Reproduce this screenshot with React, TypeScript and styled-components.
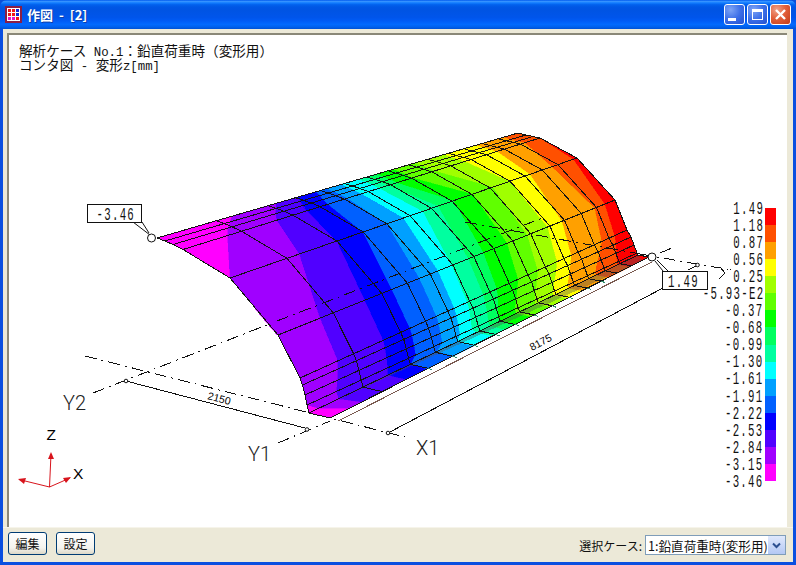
import React from "react";
import styled, { createGlobalStyle } from "styled-components";

// mesh nodes of the shell: near arc and far arc, same index = same longitudinal line
const NEAR: [number, number][] = [
  [157, 238], [165, 241], [173, 244.5], [183, 249.5], [230, 278], [278, 335],
  [300, 378], [302.5, 385], [305, 395], [307, 405], [309, 413], [330, 418],
];
const FAR: [number, number][] = [
  [518, 133], [526, 135], [533, 136.5], [540, 138], [577, 158], [615, 200],
  [627, 230], [631, 237], [634, 245], [637, 253], [638, 255], [649, 257],
];
const ARCS = [0, 0.164, 0.308, 0.384, 0.452, 0.519, 0.581, 0.64, 0.697, 0.75, 0.807, 0.85, 0.9, 0.945, 1];

const BANDS = [
  "#ff00ff", "#a000ff", "#5000ff", "#0000ff", "#0060ff", "#00a0ff", "#00ffff", "#00ffa0",
  "#00ff60", "#00ff00", "#60ff00", "#a0ff00", "#ffff00", "#ffa000", "#ff5000", "#ff0000",
];
// contour position along the length at mesh lines 0,3,4,5,9,10,11
const KEY_LINES = [0, 3, 4, 5, 9, 10, 11];
const CONTOURS = [
  [0.208, 0.125, -0.03, -0.1, -0.1, 0.03, 0.06],
  [0.33, 0.263, 0.2, 0.125, 0.09, 0.09, 0.1],
  [0.39, 0.347, 0.308, 0.258, 0.245, 0.24, 0.24],
  [0.44, 0.406, 0.383, 0.338, 0.33, 0.31, 0.305],
  [0.47, 0.46, 0.452, 0.42, 0.41, 0.39, 0.387],
  [0.51, 0.5, 0.5, 0.475, 0.464, 0.45, 0.45],
  [0.56, 0.55, 0.556, 0.516, 0.5, 0.51, 0.51],
  [0.585, 0.575, 0.6, 0.565, 0.55, 0.55, 0.55],
  [0.61, 0.6, 0.645, 0.61, 0.58, 0.58, 0.58],
  [0.655, 0.644, 0.7, 0.68, 0.63, 0.63, 0.63],
  [0.715, 0.706, 0.758, 0.74, 0.69, 0.69, 0.69],
  [0.795, 0.79, 0.807, 0.8, 0.745, 0.745, 0.745],
  [0.885, 0.88, 0.865, 0.843, 0.79, 0.79, 0.79],
  [0.96, 0.958, 0.928, 0.94, 0.873, 0.873, 0.873],
  [1.03, 1.02, 0.99, 0.97, 0.94, 0.94, 0.94],
];

const LEGEND_VALUES = [
  "1.49", "1.18", "0.87", "0.56", "0.25", "-5.93-E2", "-0.37", "-0.68", "-0.99",
  "-1.30", "-1.61", "-1.91", "-2.22", "-2.53", "-2.84", "-3.15", "-3.46",
];

const at = (line: number, s: number) => {
  const a = NEAR[line];
  const b = FAR[line];
  return [a[0] + (b[0] - a[0]) * s, a[1] + (b[1] - a[1]) * s];
};

const contourAt = (k: number, line: number) => {
  const row = CONTOURS[k];
  let i = 0;
  while (i < KEY_LINES.length - 2 && line > KEY_LINES[i + 1]) i++;
  const f = (line - KEY_LINES[i]) / (KEY_LINES[i + 1] - KEY_LINES[i]);
  const v = row[i] + (row[i + 1] - row[i]) * f;
  return Math.min(1, Math.max(0, v));
};

const lines = NEAR.map((_, i) => i);

const pts = (list: number[][]) => list.map((p) => p[0].toFixed(1) + "," + p[1].toFixed(1)).join(" ");

const bandPolygon = (band: number) => {
  const from = lines.map((l) => at(l, band === 0 ? 0 : contourAt(band - 1, l)));
  const to = lines.map((l) => at(l, band === BANDS.length - 1 ? 1 : contourAt(band, l))).reverse();
  return pts([...from, ...to]);
};

const GlobalStyle = createGlobalStyle`
  html, body {
    margin: 0;
    padding: 0;
    background: #0a4fd8;
  }
  body {
    font-family: "Noto Sans CJK JP", "Liberation Sans", sans-serif;
  }
`;

const Window = styled.div`
  width: 796px;
  height: 565px;
  display: flex;
  flex-direction: column;
  background: #0a4fe0;
  border-radius: 7px 7px 0 0;
  overflow: hidden;
`;

const TitleBar = styled.div`
  height: 29px;
  flex: none;
  display: flex;
  align-items: center;
  padding: 0 5px 0 5px;
  box-sizing: border-box;
  background: linear-gradient(
    180deg,
    #0058ee 0%,
    #3593ff 5%,
    #127dff 10%,
    #0262ee 16%,
    #0057e5 24%,
    #0054e3 35%,
    #0055eb 60%,
    #005bf5 72%,
    #026afe 84%,
    #0062ef 92%,
    #0052d6 100%
  );
`;

const TitleIcon = styled.svg`
  width: 17px;
  height: 17px;
  flex: none;
`;

const TitleText = styled.div`
  margin-left: 5px;
  flex: 1;
  color: #fff;
  font-size: 13px;
  font-weight: 700;
  line-height: 16px;
  word-spacing: 3px;
  text-shadow: 1px 1px 0 #0f3fa8;
`;

const CaptionButton = styled.div<{ $close?: boolean }>`
  width: 21px;
  height: 21px;
  margin-left: 2px;
  box-sizing: border-box;
  border: 1px solid #fff;
  border-radius: 3px;
  display: flex;
  align-items: center;
  justify-content: center;
  background: ${(p) =>
    p.$close
      ? "radial-gradient(circle at 30% 25%, #f0a28a 0%, #e2613c 45%, #c23a17 100%)"
      : "radial-gradient(circle at 30% 25%, #7ea4f5 0%, #3d6fe8 50%, #2350cf 100%)"};
`;

const MinGlyph = styled.span`
  width: 8px;
  height: 3px;
  background: #fff;
  margin: 9px 5px 0 0;
`;

const MaxGlyph = styled.span`
  width: 11px;
  height: 11px;
  box-sizing: border-box;
  border: 1px solid #fff;
  border-top-width: 3px;
`;

const Client = styled.div`
  flex: 1;
  min-height: 0;
  margin: 0 3px 3px 3px;
  display: flex;
  flex-direction: column;
  background: #ece9d8;
`;

const Canvas = styled.div`
  position: relative;
  flex: 1;
  min-height: 0;
  margin: 4px 6px 0 4px;
  background: #fff;
  border-top: 2px solid #8a8878;
  border-left: 2px solid #8a8878;
  overflow: hidden;
`;

const CaseHeading = styled.div`
  position: relative;
  padding: 8px 0 0 10px;
  font-size: 13.6px;
  color: #111;
`;

const HeadingLine = styled.div`
  height: 14px;
  line-height: 14px;
  white-space: pre;
`;

const Half = styled.span`
  font-family: "Liberation Mono", monospace;
  font-size: 12.4px;
  line-height: 1;
`;

const Drawing = styled.svg`
  position: absolute;
  left: 0;
  top: 0;
`;

const CalloutText = styled.text`
  font-family: "Liberation Mono", monospace;
  font-size: 18.5px;
  letter-spacing: 2.2px;
  fill: #111;
`;

const DimText = styled.text`
  font-family: "Liberation Sans", sans-serif;
  font-size: 10.5px;
  fill: #000;
`;

const AxisName = styled.text`
  font-family: "Roboto", "Liberation Sans", sans-serif;
  font-size: 20px;
  font-weight: 300;
  fill: #222;
`;

const TriadName = styled.text`
  font-family: "Liberation Sans", sans-serif;
  font-size: 15.5px;
  fill: #000;
`;

const Legend = styled.div`
  position: absolute;
  right: 11px;
  top: 166px;
  display: flex;
  align-items: flex-start;
  gap: 1px;
`;

const LegendLabels = styled.div`
  display: flex;
  flex-direction: column;
  align-items: flex-end;
`;

const LegendLabel = styled.div`
  height: 17.06px;
  line-height: 17.06px;
  font-family: "Liberation Mono", monospace;
  font-size: 18.5px;
  letter-spacing: 2.2px;
  color: #111;
  white-space: nowrap;
  transform: scaleX(0.58);
  transform-origin: right center;
`;

const LegendBar = styled.div`
  width: 11px;
  height: 273px;
  margin-top: 7px;
  display: flex;
  flex-direction: column-reverse;
`;

const Swatch = styled.div<{ $color: string }>`
  flex: 1;
  background: ${(p) => p.$color};
`;

const Footer = styled.div`
  height: 35px;
  flex: none;
  box-sizing: border-box;
  padding: 4px 7px 0 5px;
  display: flex;
  align-items: flex-start;
  gap: 9px;
  border-top: 1px solid #f6f4ea;
`;

const XpButton = styled.button`
  width: 39px;
  height: 23px;
  padding: 0;
  box-sizing: border-box;
  border: 1px solid #003c74;
  border-radius: 3px;
  background: linear-gradient(180deg, #ffffff 0%, #f4f3ee 70%, #dcd8c8 100%);
  font-family: inherit;
  font-size: 12px;
  color: #111;
`;

const CaseGroup = styled.div`
  margin: 3px 0 0 auto;
  display: flex;
  align-items: center;
  gap: 3px;
  font-size: 12px;
  color: #111;
`;

const CaseSelect = styled.div`
  width: 141px;
  height: 20px;
  box-sizing: border-box;
  border: 1px solid #7f9db9;
  background: #fff;
  display: flex;
  align-items: center;
  justify-content: space-between;
  padding-left: 2px;
  overflow: hidden;
`;

const CaseValue = styled.span`
  flex: 1;
  overflow: hidden;
  white-space: nowrap;
  font-size: 12.6px;
`;

const DropArrow = styled.div`
  width: 17px;
  height: 18px;
  flex: none;
  display: flex;
  align-items: center;
  justify-content: center;
  background: linear-gradient(180deg, #dfe8fc 0%, #b4c8f4 100%);
`;

const DimLine = ({ a, b }: { a: number[]; b: number[] }) => (
  <line x1={a[0]} y1={a[1]} x2={b[0]} y2={b[1]} stroke="#111" strokeWidth="1" />
);

const Shell = () => (
  <g shapeRendering="crispEdges">
    {BANDS.map((c, i) => (
      <polygon key={c} points={bandPolygon(i)} fill={c} stroke={c} strokeWidth="0.4" />
    ))}
    {/* dull strip along the foot of the shell */}
    <polygon points={pts([at(10, 0.02), at(10, 1), at(11, 0.98), at(11, 0.96)])} fill="#555" fillOpacity="0.4" />
    {lines.map((l) => (
      <polyline key={l} points={pts([at(l, 0), at(l, 1)])} fill="none" stroke="#141414" strokeWidth="1" />
    ))}
    {ARCS.map((s) => (
      <polyline key={s} points={pts(lines.map((l) => at(l, s)))} fill="none" stroke="#141414" strokeWidth="1" />
    ))}
    {ARCS.slice(2, 12).map((s) => {
      const p = at(11, s);
      return <line key={s} x1={p[0]} y1={p[1]} x2={p[0] + 4} y2={p[1] + 1.5} stroke="#2f8f6a" strokeWidth="1" />;
    })}
    <line x1="338" y1="421" x2="652" y2="262" stroke="#7a5a50" strokeWidth="1" />
  </g>
);

const Guides = () => (
  <g fill="none" stroke="#111" strokeWidth="1" shapeRendering="crispEdges">
    <g strokeDasharray="12 5 2 5">
      <line x1="85" y1="356" x2="405" y2="437" />
      <line x1="93" y1="393" x2="277" y2="321" />
      <line x1="640" y1="254" x2="720" y2="268" />
      <line x1="278" y1="443" x2="330" y2="421" />
      <line x1="660" y1="253" x2="672" y2="248" />
      <line x1="688" y1="270" x2="698" y2="265" />
    </g>
    <polyline points="720,267 725,273 719,279" />
    <line x1="727" y1="269" x2="731" y2="269" strokeDasharray="1 2" />
    <DimLine a={[126, 381]} b={[305, 428]} />
    <DimLine a={[388, 433]} b={[663, 288]} />
  </g>
);

const Marks = () => (
  <g fill="#fff" stroke="#111" strokeWidth="1">
    <circle cx="126" cy="381" r="1.8" />
    <circle cx="307" cy="429.5" r="1.8" />
    <circle cx="388" cy="433" r="1.8" />
    <circle cx="697.5" cy="265" r="1.8" />
  </g>
);

const Callouts = () => (
  <g>
    <g fill="none" stroke="#111" strokeWidth="1">
      <line x1="133" y1="222" x2="150" y2="235" />
      <line x1="142" y1="222" x2="149" y2="233" />
      <line x1="657" y1="260" x2="668" y2="271" />
      <line x1="655" y1="261" x2="663" y2="271" />
      <circle cx="151.5" cy="238" r="4" fill="#fff" fillOpacity="0.6" />
      <circle cx="652" cy="257" r="4" fill="#fff" />
    </g>
    <rect x="87.5" y="204.5" width="54" height="18" fill="#fff" stroke="#111" shapeRendering="crispEdges" />
    <CalloutText transform="translate(96.5 220) scale(0.58 1)">-3.46</CalloutText>
    <rect x="662.5" y="271.5" width="45" height="18" fill="#fff" stroke="#111" shapeRendering="crispEdges" />
    <CalloutText transform="translate(668 287) scale(0.58 1)">1.49</CalloutText>
  </g>
);

const Triad = () => (
  <g>
    <g stroke="#d8141c" strokeWidth="1" fill="none">
      <line x1="49.5" y1="487" x2="51" y2="454" />
      <line x1="49.5" y1="487" x2="70" y2="478" />
      <line x1="49.5" y1="487" x2="19" y2="479.5" />
    </g>
    <g fill="#d8141c">
      <polygon points="51,452 48,459 54,459" />
      <polygon points="71,477 63,478 66,483" />
      <polygon points="18,479 26,478 24,484" />
    </g>
    <TriadName x="46.5" y="440">Z</TriadName>
    <TriadName x="73" y="479">X</TriadName>
  </g>
);

const Arrow = () => (
  <svg width="9" height="7" viewBox="0 0 9 7">
    <path d="M1 1.5 L4.5 5 L8 1.5" fill="none" stroke="#2c4f90" strokeWidth="2" />
  </svg>
);

const ICON_CELLS = [
  ["#f01818", "#f01818", "#1428d8"],
  ["#f01818", "#f01818", "#1428d8"],
  ["#e810c8", "#e810c8", "#f01818"],
];

const App = () => {
  return (
    <>
      <GlobalStyle />
      <Window>
        <TitleBar>
          <TitleIcon viewBox="0 0 17 17" shapeRendering="crispEdges">
            <rect x="0" y="0" width="17" height="17" fill="#8a1f45" />
            <rect x="2" y="2" width="13" height="13" fill="#fff" />
            {ICON_CELLS.map((row, r) =>
              row.map((c, i) => <rect key={r + "-" + i} x={3 + i * 4} y={3 + r * 4} width="3" height="3" fill={c} />)
            )}
          </TitleIcon>
          <TitleText>作図 - [2]</TitleText>
          <CaptionButton>
            <MinGlyph />
          </CaptionButton>
          <CaptionButton>
            <MaxGlyph />
          </CaptionButton>
          <CaptionButton $close>
            <svg width="13" height="13" viewBox="0 0 13 13">
              <path d="M2 2 L11 11 M11 2 L2 11" stroke="#fff" strokeWidth="2.4" />
            </svg>
          </CaptionButton>
        </TitleBar>
        <Client>
          <Canvas>
            <Drawing width="778" height="492" viewBox="9 35 778 492">
              <Guides />
              <Shell />
              <g fill="none" stroke="#111" strokeDasharray="12 5 2 5" shapeRendering="crispEdges">
                <line x1="277" y1="321" x2="545" y2="217" />
                <line x1="465" y1="222" x2="640" y2="254" />
              </g>
              <Marks />
              <Callouts />
              <DimText transform="translate(207 399) rotate(14.7)">2150</DimText>
              <DimText transform="translate(532 351) rotate(-28)">8175</DimText>
              <AxisName x="63" y="410">Y2</AxisName>
              <AxisName x="248" y="461">Y1</AxisName>
              <AxisName x="416" y="455">X1</AxisName>
              <Triad />
            </Drawing>
            <CaseHeading>
              <HeadingLine>
                解析ケース<Half> No.1</Half>：鉛直荷重時（変形用）
              </HeadingLine>
              <HeadingLine>
                コンタ図<Half> - </Half>変形<Half>z[mm]</Half>
              </HeadingLine>
            </CaseHeading>
            <Legend>
              <LegendLabels>
                {LEGEND_VALUES.map((v) => (
                  <LegendLabel key={v}>{v}</LegendLabel>
                ))}
              </LegendLabels>
              <LegendBar>
                {BANDS.map((c) => (
                  <Swatch key={c} $color={c} />
                ))}
              </LegendBar>
            </Legend>
          </Canvas>
          <Footer>
            <XpButton>編集</XpButton>
            <XpButton>設定</XpButton>
            <CaseGroup>
              選択ケース:
              <CaseSelect>
                <CaseValue>1:鉛直荷重時(変形用)</CaseValue>
                <DropArrow>
                  <Arrow />
                </DropArrow>
              </CaseSelect>
            </CaseGroup>
          </Footer>
        </Client>
      </Window>
    </>
  );
};

export default App;
